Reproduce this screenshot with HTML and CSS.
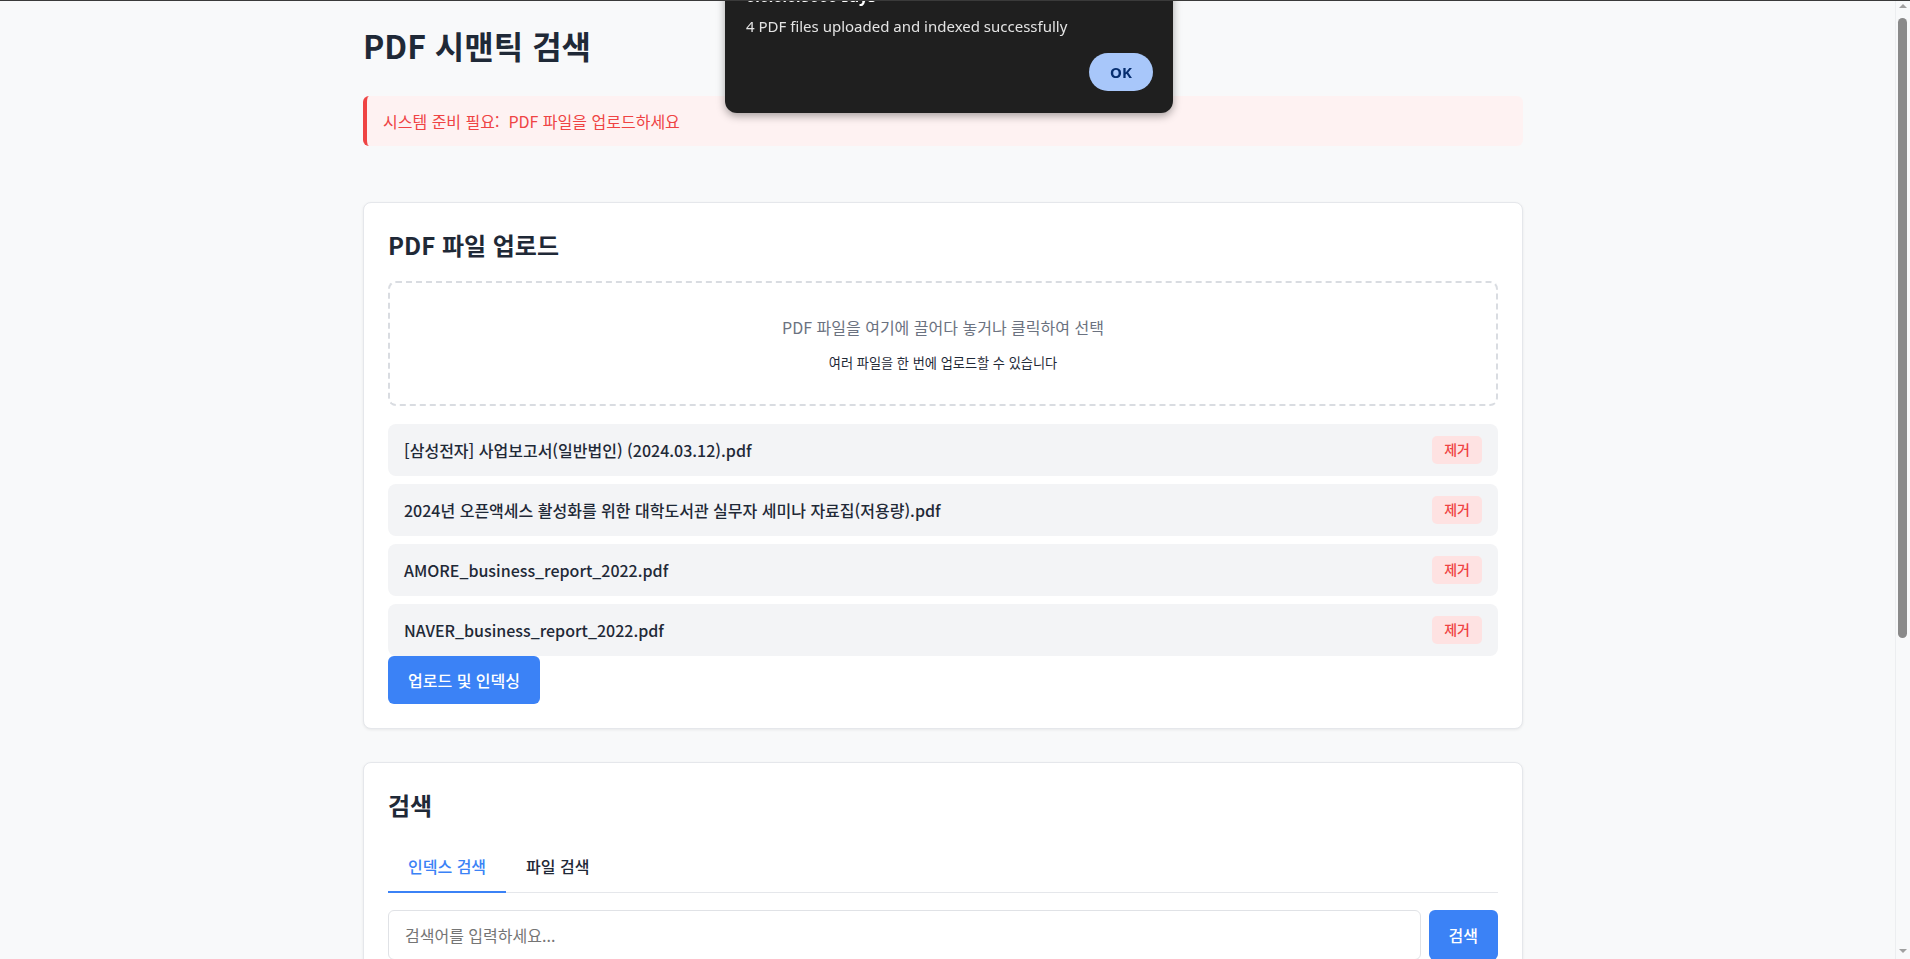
FILE: index.html
```html
<!DOCTYPE html>
<html lang="ko">
<head>
<meta charset="utf-8">
<title>PDF 시맨틱 검색</title>
<link rel="stylesheet" href="styles.css">
</head>
<body>
<div class="topline"></div>
<div class="page">
  <div class="container">
    <h1 class="title">PDF 시맨틱 검색</h1>
    <div class="alert">시스템 준비 필요:&nbsp; PDF 파일을 업로드하세요</div>

    <section class="card">
      <h2 class="card-title">PDF 파일 업로드</h2>
      <div class="dropzone">
        <p class="dz-main">PDF 파일을 여기에 끌어다 놓거나 클릭하여 선택</p>
        <p class="dz-sub">여러 파일을 한 번에 업로드할 수 있습니다</p>
      </div>
      <ul class="file-list">
        <li class="file-item"><span class="file-name">[삼성전자] 사업보고서(일반법인) (2024.03.12).pdf</span><button class="remove-btn">제거</button></li>
        <li class="file-item"><span class="file-name">2024년 오픈액세스 활성화를 위한 대학도서관 실무자 세미나 자료집(저용량).pdf</span><button class="remove-btn">제거</button></li>
        <li class="file-item"><span class="file-name">AMORE_business_report_2022.pdf</span><button class="remove-btn">제거</button></li>
        <li class="file-item"><span class="file-name">NAVER_business_report_2022.pdf</span><button class="remove-btn">제거</button></li>
      </ul>
      <button class="primary-btn">업로드 및 인덱싱</button>
    </section>

    <section class="card card-search">
      <h2 class="card-title">검색</h2>
      <div class="tabs">
        <button class="tab active">인덱스 검색</button>
        <button class="tab">파일 검색</button>
      </div>
      <div class="search-row">
        <input class="search-input" type="text" placeholder="검색어를 입력하세요...">
        <button class="primary-btn search-btn">검색</button>
      </div>
    </section>
  </div>
</div>

<div class="dialog">
  <div class="dialog-title">0.0.0.0:8000 says</div>
  <div class="dialog-msg">4 PDF files uploaded and indexed successfully</div>
  <div class="dialog-actions"><button class="dialog-ok">OK</button></div>
</div>

<div class="scrollbar">
  <span class="sb-arrow sb-up"></span>
  <span class="sb-thumb"></span>
  <span class="sb-arrow sb-down"></span>
</div>
</body>
</html>
```

FILE: styles.css
```css
* { box-sizing: border-box; }
html { overflow: hidden; }
body {
  margin: 0;
  background: #f8f9fa;
  font-family: "Noto Sans CJK KR", "Noto Sans", sans-serif;
  color: #1f2937;
}
.topline {
  position: fixed; top: 0; left: 0; right: 0;
  height: 1px; background: #3a3a3a; z-index: 20;
}
.page { padding: 22px 24px 40px 0; }
.container { width: 1160px; margin: 0 auto; }

.title {
  font-size: 32px; line-height: 46px; font-weight: 700;
  margin: 0 0 28px; color: #1f2937;
}
.alert {
  background: #fef2f2;
  border-left: 4px solid #ef4444;
  border-radius: 6px;
  padding: 13px 16px;
  font-size: 16px; line-height: 24px;
  color: #ef4444;
  margin-bottom: 56px;
}
.card {
  background: #fff;
  border: 1px solid #e5e7eb;
  border-radius: 8px;
  box-shadow: 0 1px 3px rgba(0,0,0,0.07);
  padding: 24px;
}
.card + .card { margin-top: 33px; }
.card-title {
  font-size: 24px; line-height: 36px; font-weight: 700;
  margin: 0 0 18px; color: #1f2937;
}
.dropzone {
  border: 2px dashed #d9dce1;
  border-radius: 8px;
  padding: 32px;
  text-align: center;
}
.dz-main { margin: 0 0 13.5px; font-size: 16px; line-height: 24px; color: #6b7280; }
.dz-sub { margin: 0; font-size: 13.2px; line-height: 19.5px; color: #1f2937; }

.file-list {
  list-style: none; margin: 18px 0 0; padding: 0;
  display: flex; flex-direction: column; gap: 8.5px;
}
.file-item {
  display: flex; align-items: center; justify-content: space-between;
  background: #f3f4f6; border-radius: 8px;
  padding: 12px 16px;
}
.file-name { font-size: 16px; line-height: 24px; font-weight: 500; color: #1f2937; }
.remove-btn {
  border: 0; background: #fee2e2; color: #ef4444;
  font-family: inherit; font-size: 14px; line-height: 19.5px; font-weight: 500;
  padding: 4px 12px; border-radius: 5px;
}
.primary-btn {
  border: 0; background: #3b82f6; color: #fff;
  font-family: inherit; font-size: 16px; line-height: 24px; font-weight: 500;
  padding: 12px 20px; border-radius: 6px;
}

.tabs {
  display: flex;
  border-bottom: 1px solid #e5e7eb;
  margin-bottom: 17px;
}
.tab {
  background: none; border: 0;
  border-bottom: 2px solid transparent;
  margin-bottom: -1px;
  padding: 13px 20px 13px;
  font-family: inherit; font-size: 16px; line-height: 24px; font-weight: 500;
  color: #1f2937;
}
.tab.active { color: #3b82f6; border-bottom-color: #3b82f6; }

.search-row { display: flex; gap: 8px; }
.search-input {
  flex: 1;
  border: 1px solid #e0e2e6; border-radius: 6px;
  padding: 12px 16px;
  font-family: inherit; font-size: 16px; line-height: 24px;
  color: #1f2937; background: #fff;
}
.search-input::placeholder { color: #757575; }
.search-btn { padding: 12px 20px; }

.dialog {
  position: fixed; left: 725px; top: -38px; width: 448px;
  background: #1f1f1f; border-radius: 12px;
  padding: 24px 20px 22px 21px;
  box-shadow: 0 3px 8px rgba(0,0,0,0.35);
  font-family: "Noto Sans", sans-serif;
  z-index: 10;
}
.dialog-title { font-size: 16px; line-height: 20px; font-weight: 700; color: #fff; }
.dialog-msg { margin-top: 10px; font-size: 15px; line-height: 20px; color: #e3e3e3; }
.dialog-actions { display: flex; justify-content: flex-end; margin-top: 17px; }
.dialog-ok {
  width: 64px; height: 38px; border: 0; border-radius: 19px;
  background: #a8c7fa; color: #062e6f;
  font-family: "Noto Sans", sans-serif; font-size: 15px; font-weight: 700;
}

.scrollbar {
  position: fixed; top: 0; right: 0; width: 15px; height: 100%;
  background: #f8f9fa; border-left: 1px solid #eceef0;
  z-index: 5;
}
.sb-thumb {
  position: absolute; top: 18px; left: 2px; width: 9px; height: 620px;
  background: #8a8a8a; border-radius: 5px;
}
.sb-arrow {
  position: absolute; left: 3px; width: 0; height: 0;
  border-left: 4px solid transparent; border-right: 4px solid transparent;
}
.sb-up { top: 4px; border-bottom: 4px solid #a0a0a0; }
.sb-down { bottom: 6px; border-top: 4px solid #a0a0a0; }
```
